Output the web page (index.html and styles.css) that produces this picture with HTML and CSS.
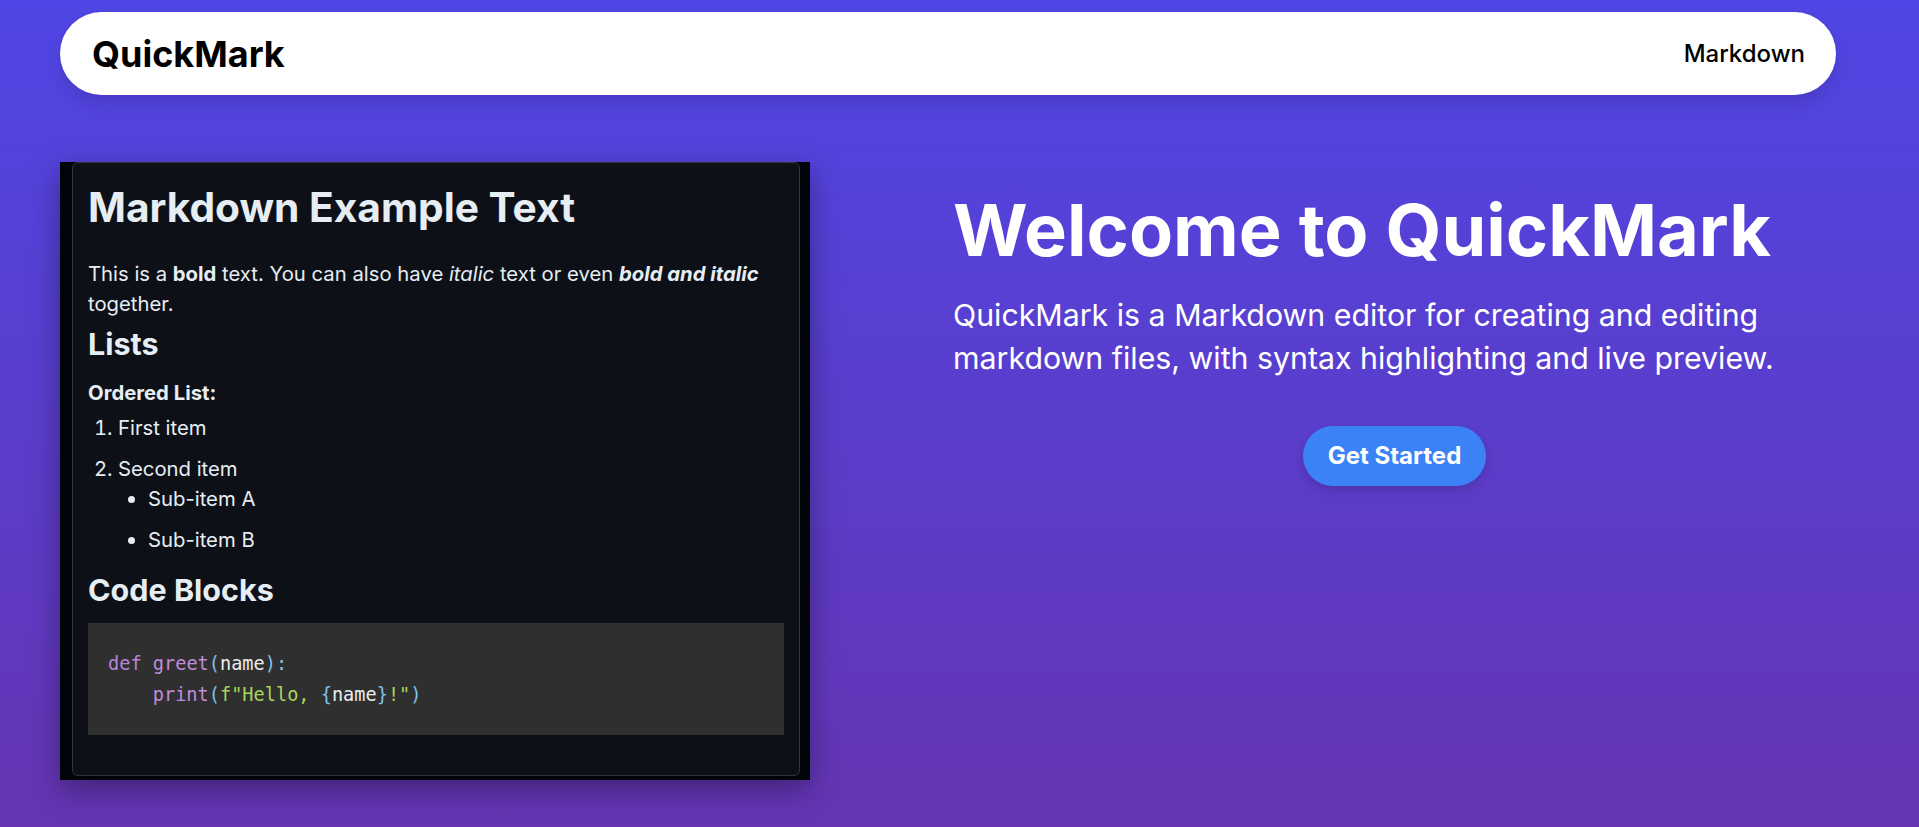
FILE: index.html
```html
<!DOCTYPE html>
<html lang="en">
<head>
<meta charset="utf-8">
<title>QuickMark</title>
<link rel="stylesheet" href="styles.css">
</head>
<body>
<div class="page">
  <header class="navbar">
    <a class="brand" href="#">QuickMark</a>
    <nav class="nav-links"><a href="#">Markdown</a></nav>
  </header>
  <main class="hero">
    <section class="preview-frame">
      <article class="markdown-body">
        <h1>Markdown Example Text</h1>
        <p>This is a <strong>bold</strong> text. You can also have <em>italic</em> text or even <strong><em>bold and italic</em></strong> together.</p>
        <h2>Lists</h2>
        <p class="label"><strong>Ordered List:</strong></p>
        <ol>
          <li>First item</li>
          <li>Second item
            <ul>
              <li>Sub-item A</li>
              <li>Sub-item B</li>
            </ul>
          </li>
        </ol>
        <h2 class="h2-code">Code Blocks</h2>
        <pre class="code"><code><span class="kw">def</span> <span class="fn">greet</span><span class="pn">(</span><span class="var">name</span><span class="pn">):</span>
    <span class="fn">print</span><span class="pn">(</span><span class="str">f"Hello, </span><span class="pn">{</span><span class="var">name</span><span class="pn">}</span><span class="str">!"</span><span class="pn">)</span></code></pre>
      </article>
    </section>
    <section class="intro">
      <h1 class="intro-title">Welcome to QuickMark</h1>
      <p class="intro-text">QuickMark is a Markdown editor for creating and editing markdown files, with syntax highlighting and live preview.</p>
      <div class="cta"><a class="btn" href="#">Get Started</a></div>
    </section>
  </main>
</div>
</body>
</html>
```
FILE: styles.css
```css
* {
  box-sizing: border-box;
}

html,
body {
  margin: 0;
  padding: 0;
}

html {
  overflow-y: scroll;
}

::-webkit-scrollbar {
  width: 23px;
  background: #f0f0f0;
}

::-webkit-scrollbar-track {
  background: #f0f0f0;
}

::-webkit-scrollbar-thumb {
  background: #c1c1c1;
  border: 2px solid #f0f0f0;
  border-top-width: 0;
  border-bottom-width: 0;
}

body {
  font-family: "Inter", "Noto Sans", sans-serif;
  background: linear-gradient(180deg, #4f46e5 0%, #6832ab 100%);
  color: #fff;
}

.page {
  width: 1776px;
  margin-left: 60px;
  padding: 12px 0 176px;
}

/* Navbar */
.navbar {
  display: flex;
  align-items: center;
  justify-content: space-between;
  height: 83px;
  padding: 0 31px 0 32px;
  background: #fff;
  border-radius: 42px;
  box-shadow: 0 8px 18px rgba(0, 0, 0, 0.12);
}

.brand {
  font-size: 36px;
  font-weight: 700;
  color: #000;
  text-decoration: none;
}

.nav-links a {
  font-size: 24px;
  font-weight: 500;
  color: #000;
  text-decoration: none;
}

/* Hero */
.hero {
  display: flex;
  align-items: flex-start;
  gap: 143px;
  margin-top: 67px;
}

.preview-frame {
  flex: none;
  width: 750px;
  background: #010409;
  padding: 0 10px 4px 12px;
  box-shadow: 0 10px 28px rgba(0, 0, 0, 0.35);
}

.markdown-body {
  background: #0d1117;
  border: 1px solid #30363d;
  border-radius: 6px;
  padding: 0 15px 40px;
  color: #e6edf3;
  font-size: 20.3px;
  line-height: 30px;
}

.markdown-body h1 {
  margin: 20px 0 0;
  font-size: 40.7px;
  line-height: 50px;
  font-weight: 700;
}

.markdown-body p {
  margin: 26px 0 0;
}

.markdown-body h2 {
  margin: 6px 0 0;
  font-size: 30.5px;
  line-height: 38px;
  font-weight: 700;
}

.markdown-body .label {
  margin-top: 15px;
}

.markdown-body ol {
  margin: 5px 0 0;
  padding-left: 30px;
}

.markdown-body ul {
  margin: 0;
  padding-left: 30px;
  list-style: disc;
}

.markdown-body li + li {
  margin-top: 11px;
}

.markdown-body .h2-code {
  margin-top: 16px;
}

.code {
  margin: 14px 0 0;
  padding: 25px 20px;
  background: #2f2f2f;
  font-family: "DejaVu Sans Mono", "Liberation Mono", monospace;
  font-size: 18.6px;
  line-height: 31px;
  color: #e8e8e8;
}

.code .kw {
  color: #b884d6;
}

.code .fn {
  color: #c08cdc;
}

.code .pn {
  color: #7cc4ea;
}

.code .str {
  color: #a6d75c;
}

.code .var {
  color: #ececec;
}

/* Intro */
.intro {
  flex: 1;
  padding-top: 25px;
}

.intro-title {
  margin: 0;
  font-size: 72px;
  line-height: 1.2;
  font-weight: 700;
}

.intro-text {
  margin: 21px 0 0;
  font-size: 30.3px;
  line-height: 43px;
}

.cta {
  margin-top: 46px;
  text-align: center;
}

.btn {
  display: inline-block;
  height: 60px;
  padding: 0 25px;
  line-height: 60px;
  font-size: 24px;
  font-weight: 700;
  color: #fff;
  text-decoration: none;
  background: #3b82f6;
  border-radius: 30px;
  box-shadow: 0 4px 10px rgba(0, 0, 0, 0.15);
}
```
